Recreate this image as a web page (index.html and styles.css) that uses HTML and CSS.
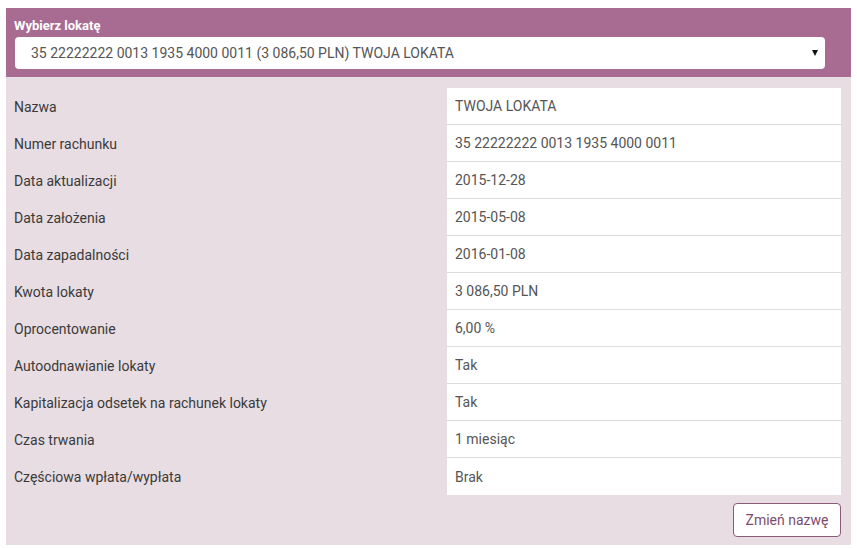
FILE: index.html
```html
<!DOCTYPE html>
<html lang="pl">
<head>
    <meta charset="UTF-8">
    <title>Lokata</title>
    <link rel="stylesheet" href="styles.css">
</head>
<body>
    <div class="box">
        <!-- wybor lokaty -->
        <div class="header">
            <div class="header-label">Wybierz lokatę</div>
            <div class="select">
                <span>35 22222222 0013 1935 4000 0011 (3 086,50 PLN) TWOJA LOKATA</span>
                <span class="arrow"></span>
            </div>
        </div>

        <!-- szczegoly -->
        <div class="panel">
            <div class="details">
                <div class="row"><div class="label">Nazwa</div><div class="value">TWOJA LOKATA</div></div>
                <div class="row"><div class="label">Numer rachunku</div><div class="value">35 22222222 0013 1935 4000 0011</div></div>
                <div class="row"><div class="label">Data aktualizacji</div><div class="value">2015-12-28</div></div>
                <div class="row"><div class="label">Data założenia</div><div class="value">2015-05-08</div></div>
                <div class="row"><div class="label">Data zapadalności</div><div class="value">2016-01-08</div></div>
                <div class="row"><div class="label">Kwota lokaty</div><div class="value">3 086,50 PLN</div></div>
                <div class="row"><div class="label">Oprocentowanie</div><div class="value">6,00 %</div></div>
                <div class="row"><div class="label">Autoodnawianie lokaty</div><div class="value">Tak</div></div>
                <div class="row"><div class="label">Kapitalizacja odsetek na rachunek lokaty</div><div class="value">Tak</div></div>
                <div class="row"><div class="label">Czas trwania</div><div class="value">1 miesiąc</div></div>
                <div class="row last"><div class="label">Częściowa wpłata/wypłata</div><div class="value">Brak</div></div>
            </div>
            <div class="actions">
                <button class="btn">Zmień nazwę</button>
            </div>
        </div>
    </div>
</body>
</html>
```

FILE: styles.css
```css
body { margin: 0; padding: 8px 6px 0 6px; background: #fff; font-family: Roboto, 'Liberation Sans', sans-serif; font-size: 14px; color: #333; }

.box { width: 845px; }

.header { background: #a86b92; padding: 8px 26px 8px 9px; }
.header-label { color: #fff; font-weight: bold; font-size: 13px; line-height: 20px; margin-left: -1px; margin-bottom: 1px; }

.select {
    background: #fff;
    border-radius: 4px;
    height: 32px;
    display: flex;
    align-items: center;
    justify-content: space-between;
    padding: 0 7px 0 16px;
    color: #555;
}
.arrow { width: 0; height: 0; border-left: 3px solid transparent; border-right: 3px solid transparent; border-top: 6px solid #111; }

.panel { background: #e8dde3; padding: 11px 10px 8px 8px; }

.row { display: flex; height: 37px; }
.label { flex: 1; display: flex; align-items: center; color: #3a3a3a; }
.value {
    box-sizing: border-box;
    width: 394px;
    height: 37px;
    background: #fff;
    border-bottom: 1px solid #dcdcdc;
    padding: 0 8px;
    display: flex;
    align-items: center;
    color: #555;
}
.row.last .value { border-bottom: none; }

.actions { display: flex; justify-content: flex-end; padding-top: 8px; }
.btn {
    font-family: Roboto, 'Liberation Sans', sans-serif;
    font-size: 14px;
    color: #7b4d6c;
    background: #fff;
    border: 1px solid #8a5a7a;
    border-radius: 4px;
    width: 108px;
    height: 34px;
    padding: 0;
}
```
